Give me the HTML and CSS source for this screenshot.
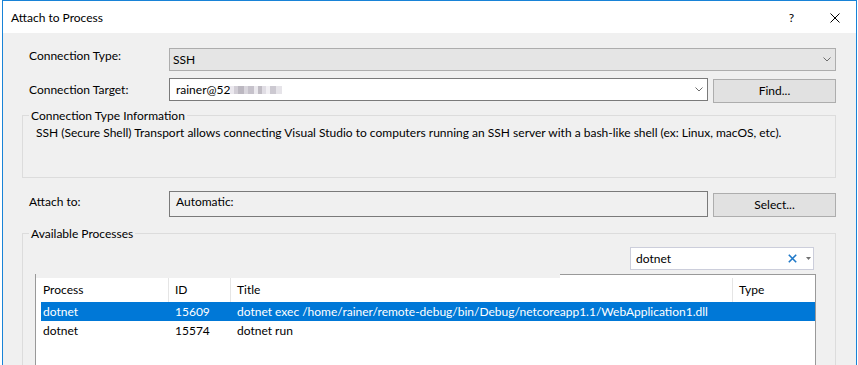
FILE: index.html
```html
<!DOCTYPE html>
<html lang="en">
<head>
  <meta charset="UTF-8">
  <meta name="viewport" content="width=device-width, initial-scale=1.0">
  <title>Attach to Process</title>
  <link rel="stylesheet" href="styles.css">
</head>
<body>
  <div class="window">
    <div class="titlebar">
      <span class="title">Attach to Process</span>
      <span class="help">?</span>
      <svg class="close" width="10" height="10" viewBox="0 0 10 10">
        <path d="M0.5 0.5 L9.5 9.5 M9.5 0.5 L0.5 9.5" stroke="#000" stroke-width="1" fill="none"/>
      </svg>
    </div>

    <div class="content">
      <!-- Type de connexion -->
      <div class="row row-type">
        <span class="label">Connection Type:</span>
        <div class="combo combo-disabled">
          <span>SSH</span>
          <svg class="chev" width="8" height="5" viewBox="0 0 8 5">
            <path d="M0.5 0.5 L4 4 L7.5 0.5" stroke="#6d6d6d" fill="none"/>
          </svg>
        </div>
      </div>

      <!-- Cible -->
      <div class="row row-target">
        <span class="label">Connection Target:</span>
        <div class="combo combo-edit">
          <span>rainer@52</span><span class="masked"></span>
          <svg class="chev" width="8" height="5" viewBox="0 0 8 5">
            <path d="M0.5 0.5 L4 4 L7.5 0.5" stroke="#6d6d6d" fill="none"/>
          </svg>
        </div>
        <button class="btn btn-find">Find...</button>
      </div>

      <fieldset class="group group-info">
        <legend>Connection Type Information</legend>
        <p class="desc">SSH (Secure Shell) Transport allows connecting Visual Studio to computers running an SSH server with a bash-like shell (ex: Linux, macOS, etc).</p>
      </fieldset>

      <div class="row row-attach">
        <span class="label">Attach to:</span>
        <div class="readonly">Automatic:</div>
        <button class="btn btn-select">Select...</button>
      </div>

      <fieldset class="group group-proc">
        <legend>Available Processes</legend>
        <div class="search">
          <span class="search-text">dotnet</span>
          <svg class="clear" width="9" height="9" viewBox="0 0 9 9">
            <path d="M0.8 0.8 L8.2 8.2 M8.2 0.8 L0.8 8.2" stroke="#1e78c8" stroke-width="1.6" fill="none"/>
          </svg>
          <svg class="drop" width="5" height="3" viewBox="0 0 5 3">
            <path d="M0 0 H5 L2.5 3 Z" fill="#717171"/>
          </svg>
        </div>

        <div class="list">
          <div class="list-body">
            <div class="list-head">
              <div class="cell c1">Process</div>
              <div class="cell c2">ID</div>
              <div class="cell c3">Title</div>
              <div class="cell c4">Type</div>
            </div>
            <div class="list-row selected">
              <div class="cell c1">dotnet</div>
              <div class="cell c2">15609</div>
              <div class="cell c3">dotnet exec /home/rainer/remote-debug/bin/Debug/netcoreapp1.1/WebApplication1.dll</div>
              <div class="cell c4"></div>
            </div>
            <div class="list-row">
              <div class="cell c1">dotnet</div>
              <div class="cell c2">15574</div>
              <div class="cell c3">dotnet run</div>
              <div class="cell c4"></div>
            </div>
          </div>
        </div>
      </fieldset>
    </div>
  </div>
</body>
</html>
```
FILE: styles.css
```css
html, body {
  margin: 0;
  height: 100%;
  overflow: hidden;
}
body {
  background: #fff;
  padding-left: 2px;
  font: 12px/15px Lato, "Noto Sans", sans-serif;
  color: #000;
}
* {
  box-sizing: border-box;
}

.window {
  width: 855px;
  height: 100%;
  border: 1px solid #1883d7;
  border-bottom: 0;
  background: #f0f0f0;
}

/* barre de titre */
.titlebar {
  height: 32px;
  background: #fff;
  display: flex;
  align-items: flex-start;
  padding: 9px 0 0 8px;
}
.help {
  margin-left: auto;
  margin-right: 36px;
}
.close {
  margin-top: 3px;
  margin-right: 16px;
}

.content {
  padding: 15px 20px 0 19px;
}

.row {
  display: flex;
  align-items: flex-start;
}
.label {
  flex: none;
  width: 147px;
  padding-left: 7px;
}
.row-target {
  margin-top: 7px;
}
.row-target .label {
  padding-top: 4px;
}
.row-attach {
  margin-top: 13px;
}
.row-attach .label {
  padding-top: 3px;
}

.combo {
  display: flex;
  align-items: center;
  height: 23px;
}
.combo .chev {
  margin-left: auto;
  margin-right: 4px;
}
.combo-disabled {
  flex: 1;
  border: 1px solid #adadad;
  background: #e5e5e5;
  padding-left: 3px;
}
.combo-edit {
  width: 539px;
  border: 1px solid #7a7a7a;
  background: #fff;
  padding-left: 6px;
}
.masked {
  display: inline-block;
  width: 52px;
  height: 8px;
  margin-top: 1px;
  background: linear-gradient(90deg, #ebe8ee 0 4px, #d2ced6 4px 8px, #bcb8c1 8px 14px, #d9d6dd 14px 18px, #c6c2cb 18px 24px, #ebe9ee 24px 28px, #c0bcc4 28px 32px, #e0dde4 32px 36px, #f2f0f4 36px 40px, #ccc9d1 40px 46px, #e6e4e9 46px 52px);
}

.btn {
  width: 123px;
  height: 24px;
  margin-left: 5px;
  border: 1px solid #adadad;
  background: #e1e1e1;
  font: inherit;
  line-height: 22px;
  color: #000;
  padding: 0;
}
.btn-find {
  margin-top: 1px;
}
.btn-select {
  margin-top: 2px;
}

.readonly {
  width: 539px;
  height: 26px;
  border: 1px solid #7a7a7a;
  padding: 2px 0 0 6px;
}

/* cadres */
.group {
  margin: 5px 0 0;
  min-width: 0;
  border: 1px solid #dcdcdc;
  padding: 2px 0 37px;
}
.group legend {
  margin-left: 6px;
  padding: 0 2px;
  line-height: 15px;
}
.desc {
  margin: 0;
  padding-left: 13px;
}
.group-proc {
  margin-top: 9px;
  padding: 6px 0 0;
  border-bottom: 0;
}

.search {
  display: flex;
  align-items: center;
  width: 184px;
  height: 23px;
  margin-left: auto;
  margin-right: 21px;
  border: 1px solid #cccedb;
  background: #fff;
  padding-left: 5px;
}
.search .clear {
  margin-left: auto;
  margin-right: 9px;
}
.search .drop {
  margin-right: 2px;
}

/* liste des processus */
.list {
  margin: 4px 19px 0 12px;
  height: 91px;
  border-left: 1px solid #999;
  border-right: 1px solid #999;
}
.list::before {
  content: '';
  display: block;
  height: 3px;
  margin-left: 524px;
  border-top: 1px solid #999;
  background: #fff;
}
.list-body {
  height: 88px;
  background: #fff;
  padding-left: 5px;
}
.list-head,
.list-row {
  display: flex;
}
.cell {
  flex: none;
  padding-left: 6px;
  white-space: nowrap;
}
.c1 {
  width: 128px;
  padding-left: 2px;
}
.c2 {
  width: 62px;
}
.c3 {
  width: 502px;
}
.c4 {
  flex: 1;
}
.list-head .cell {
  line-height: 24px;
  height: 24px;
}
.list-head .c1,
.list-head .c2,
.list-head .c3 {
  border-right: 1px solid #e5e5e5;
}
.list-row {
  height: 19px;
  line-height: 19px;
}
.list-row.selected {
  background: #0078d7;
  color: #fff;
}
```
